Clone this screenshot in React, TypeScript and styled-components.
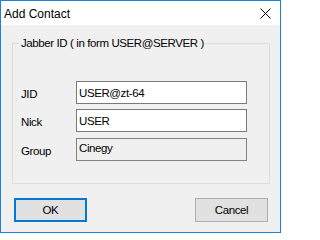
import * as React from 'react';
import styled, { createGlobalStyle } from 'styled-components';

const GlobalStyle = createGlobalStyle`
  html, body {
    margin: 0;
    padding: 0;
    background: #ffffff;
  }
  body {
    font-family: 'Liberation Sans', Arial, sans-serif;
    font-size: 11.5px;
    letter-spacing: -0.4px;
    color: #000;
  }
`;

const Window = styled.div`
  box-sizing: border-box;
  width: 281px;
  height: 233px;
  border: 1px solid #1883d7;
  display: flex;
  flex-direction: column;
  background: #f0f0f0;
`;

const TitleBar = styled.div`
  height: 24px;
  background: #fff;
  display: flex;
  align-items: center;
  justify-content: space-between;
  padding: 0 9px 0 3px;
`;

const Title = styled.span`
  font-size: 12px;
  letter-spacing: 0;
  line-height: 14px;
  padding-top: 1px;
`;

const CloseButton = styled.button`
  width: 12px;
  height: 12px;
  padding: 0;
  border: none;
  background: none;
  display: flex;
  align-items: center;
  justify-content: center;
  cursor: pointer;
`;

const Body = styled.div`
  flex: 1;
  display: flex;
  flex-direction: column;
`;

const GroupBox = styled.fieldset`
  box-sizing: border-box;
  width: 258px;
  margin: 11px 0 0 11px;
  padding: 0;
  border: 1px solid #dcdcdc;
`;

const Legend = styled.legend`
  margin-left: 6px;
  padding: 0 2px;
  line-height: 14px;
`;

const FieldGrid = styled.div`
  display: grid;
  grid-template-columns: 55px 171px;
  row-gap: 5px;
  align-items: center;
  padding: 31px 0 22px 8px;
`;

const Label = styled.label<{ $offset?: number }>`
  margin-top: ${(p) => p.$offset ?? 0}px;
  padding-top: 2px;
`;

const TextBox = styled.input<{ $offset?: number }>`
  box-sizing: border-box;
  height: 23px;
  width: 171px;
  margin: ${(p) => p.$offset ?? 0}px 0 0 0;
  padding: 0 2px;
  border: 1px solid #7a7a7a;
  background: #fff;
  font: inherit;
  letter-spacing: inherit;
  color: #000;
  outline: none;

  &:disabled {
    background: #f0f0f0;
    border-color: #838383;
    color: #000;
    padding-bottom: 3px;
  }
`;

const Footer = styled.div`
  display: flex;
  justify-content: space-between;
  padding: 14px 12px 0 13px;
`;

const DialogButton = styled.button<{ $default?: boolean }>`
  box-sizing: border-box;
  width: 73px;
  height: 24px;
  padding: 0;
  background: #e1e1e1;
  border: ${(p) => (p.$default ? '2px solid #0078d7' : '1px solid #adadad')};
  font: inherit;
  letter-spacing: inherit;
  color: #000;
  cursor: pointer;
`;

const App = () => {
  return (
    <>
      <GlobalStyle />
      <Window>
        <TitleBar>
          <Title>Add Contact</Title>
          <CloseButton aria-label='Close'>
            <svg width='11' height='11' viewBox='0 0 11 11'>
              <path d='M0.5 0.5 L10.5 10.5 M10.5 0.5 L0.5 10.5' stroke='#000' strokeWidth='1' />
            </svg>
          </CloseButton>
        </TitleBar>
        <Body>
          <GroupBox>
            <Legend>Jabber ID ( in form USER@SERVER )</Legend>
            <FieldGrid>
              <Label>JID</Label>
              <TextBox defaultValue='USER@zt-64' />
              <Label>Nick</Label>
              <TextBox defaultValue='USER' />
              <Label $offset={1}>Group</Label>
              <TextBox $offset={1} defaultValue='Cinegy' disabled />
            </FieldGrid>
          </GroupBox>
          <Footer>
            <DialogButton $default>OK</DialogButton>
            <DialogButton>Cancel</DialogButton>
          </Footer>
        </Body>
      </Window>
    </>
  );
};

export default App;
